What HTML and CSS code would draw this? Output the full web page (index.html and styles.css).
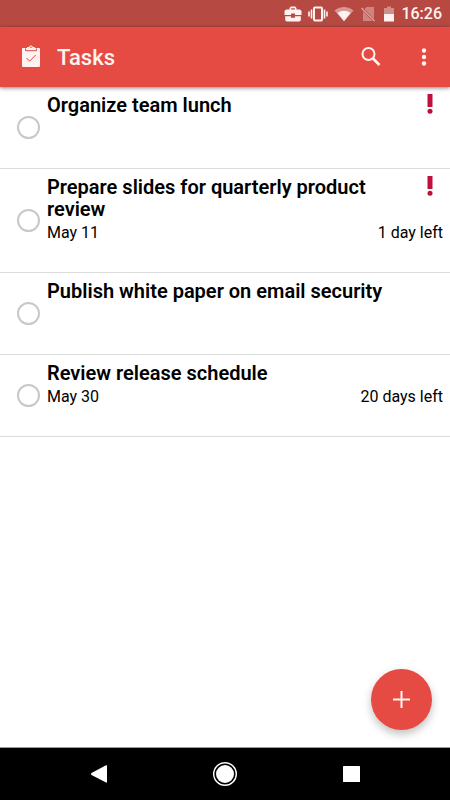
FILE: index.html
```html
<!DOCTYPE html>
<html lang="en">
<head>
<meta charset="utf-8">
<meta name="viewport" content="width=device-width, initial-scale=1">
<title>Tasks</title>
<link rel="stylesheet" href="styles.css">
</head>
<body>
<div class="status">
  <svg width="18" height="16" viewBox="0 0 18 16" fill="currentColor" aria-hidden="true"><path fill-rule="evenodd" d="M2 3.500h3.500V2l1.300-1.500h4.400L12.500 2v1.500H16l1.500 1.500v4h-6.500v-1.500H7V9H.5V5zM7.200 2.200v1.300h3.600V2.200zM1.200 10.200H7v1.500h4v-1.500h5.800v4l-1.300 1.300h-13l-1.300-1.300z"/></svg>
  <svg width="20" height="16" viewBox="0 0 20 16" aria-hidden="true"><rect x="6" y="1.500" width="8" height="13" rx="1" fill="none" stroke="currentColor" stroke-width="2"/><path d="M3.500 3.500v9M16.500 3.500v9M1 5.500v5M19 5.500v5" stroke="currentColor" stroke-width="1.600"/></svg>
  <svg width="20" height="16" viewBox="0 0 20 16" fill="currentColor" aria-hidden="true"><path opacity=".45" d="M.5 4.500C6-.3 14-.3 19.500 4.500L10 15.500z"/><path d="M3.500 7C7.500 4.100 12.500 4.100 16.500 7L10 15z"/></svg>
  <svg width="16" height="16" viewBox="0 0 16 16" aria-hidden="true"><path opacity=".35" fill="currentColor" d="M6.500 1H14v12L4.500 3zM3 5.200 12.500 15H3z"/><path d="M1.500 2 14.500 15" stroke="currentColor" stroke-opacity=".55" stroke-width="1.300"/></svg>
  <svg class="battery" width="10" height="16" viewBox="0 0 10 16" fill="currentColor" aria-hidden="true"><path opacity=".4" d="M3 .5h4V2h3v6H0V2h3z"/><path d="M0 8h10v7.500H0z"/></svg>
  <time>16:26</time>
</div>
<header class="bar">
  <svg width="20" height="24" viewBox="0 0 20 24" aria-hidden="true"><path fill="currentColor" d="M2 3h4.200V2h2C8.500 0 11.500 0 11.800 2h2v1H18q1 0 1 1v17q0 1-1 1H2q-1 0-1-1V4q0-1 1-1z"/><path d="M4.500 3.500v2.200h11V3.500M5.500 13l3.200 3.200 6-6.200" fill="none" stroke="#e54b42" stroke-width="1"/><circle cx="10" cy="2.200" r=".8" fill="#e54b42"/></svg>
  <h1>Tasks</h1>
  <button type="button" aria-label="Search"><svg width="22" height="22" viewBox="0 0 22 22" fill="none" stroke="currentColor" aria-hidden="true"><circle cx="8.500" cy="8" r="6" stroke-width="2"/><path d="m13 12.500 6.500 6.500" stroke-width="2.600"/></svg></button>
  <button type="button" aria-label="More options" class="more"><svg width="6" height="20" viewBox="0 0 6 20" fill="currentColor" aria-hidden="true"><circle cx="3" cy="3.500" r="2.200"/><circle cx="3" cy="10" r="2.200"/><circle cx="3" cy="16.500" r="2.200"/></svg></button>
</header>
<main>
  <ul class="tasks">
    <li>
      <input type="checkbox" id="t1">
      <div class="body">
        <div class="line"><label for="t1">Organize team lunch</label><svg class="priority" width="6" height="20" viewBox="0 0 6 20" role="img" aria-label="High priority"><path d="M.5 0h5v13h-5z"/><circle cx="3" cy="17.300" r="2.500"/></svg></div>
      </div>
    </li>
    <li>
      <input type="checkbox" id="t2">
      <div class="body">
        <div class="line"><label for="t2">Prepare slides for quarterly product review</label><svg class="priority" width="6" height="20" viewBox="0 0 6 20" role="img" aria-label="High priority"><path d="M.5 0h5v13h-5z"/><circle cx="3" cy="17.300" r="2.500"/></svg></div>
        <div class="due"><span>May 11</span><span>1 day left</span></div>
      </div>
    </li>
    <li>
      <input type="checkbox" id="t3">
      <div class="body">
        <div class="line"><label for="t3">Publish white paper on email security</label></div>
      </div>
    </li>
    <li>
      <input type="checkbox" id="t4">
      <div class="body">
        <div class="line"><label for="t4">Review release schedule</label></div>
        <div class="due"><span>May 30</span><span>20 days left</span></div>
      </div>
    </li>
  </ul>
</main>
<button type="button" class="add" aria-label="Add task"><svg width="17" height="17" viewBox="0 0 17 17" stroke="currentColor" stroke-width="2" aria-hidden="true"><path d="M8.500 0v17M0 8.500h17"/></svg></button>
<nav class="nav" aria-label="System">
  <button type="button" aria-label="Back"><svg width="26" height="26" viewBox="0 0 26 26" fill="currentColor" aria-hidden="true"><path d="M21 5v16q0 1-1 .5L5.500 14q-1.200-1 0-2L20 4.300q1-.3 1 .7z"/></svg></button>
  <button type="button" aria-label="Home"><svg width="26" height="26" viewBox="0 0 26 26" aria-hidden="true"><circle cx="13" cy="13" r="11.300" fill="none" stroke="currentColor" stroke-width="1.400"/><circle cx="13" cy="13" r="9" fill="currentColor"/></svg></button>
  <button type="button" aria-label="Recent apps"><svg width="26" height="26" viewBox="0 0 26 26" fill="currentColor" aria-hidden="true"><rect x="5" y="5" width="17" height="16" rx=".6"/></svg></button>
</nav>
</body>
</html>
```
FILE: styles.css
```css
* {
  box-sizing: border-box;
}

body {
  margin: 0;
  min-height: 100vh;
  display: flex;
  flex-direction: column;
  background: #fff;
  color: #000;
  font-family: Roboto, sans-serif;
}

button {
  display: flex;
  align-items: center;
  justify-content: center;
  padding: 0;
  border: 0;
  background: none;
  color: inherit;
}

svg {
  display: block;
  flex: none;
}

.status {
  display: flex;
  align-items: center;
  justify-content: flex-end;
  gap: 6px;
  height: 27px;
  padding-right: 8px;
  background: #b64a43;
  color: #fff3f1;
}

.status time {
  font-size: 16px;
  font-weight: 500;
  line-height: 20px;
}

.battery {
  margin: 0 1px 0 2px;
}

.bar {
  position: relative;
  display: flex;
  align-items: center;
  height: 60px;
  padding: 0 8px 0 21px;
  background: #e54b42;
  color: #fff3f1;
  box-shadow: 0 1px 4px rgba(0, 0, 0, 0.5);
}

.bar h1 {
  flex: 1;
  margin: 0 0 0 16px;
  padding-top: 2px;
  font-size: 22px;
  font-weight: 500;
  line-height: 28px;
}

.bar button {
  width: 48px;
  height: 48px;
  margin-right: 11px;
}

.bar .more {
  width: 36px;
  margin-right: 0;
}

main {
  flex: 1;
}

.tasks {
  margin: 0;
  padding: 0;
  list-style: none;
}

.tasks li {
  display: flex;
  align-items: center;
  min-height: 82px;
  padding: 0 7px 0 17px;
  border-bottom: 1px solid #dcdcdc;
}

.tasks input {
  appearance: none;
  flex: none;
  width: 23px;
  height: 23px;
  margin: 0 7px 0 0;
  border: 2px solid #c8c8c8;
  border-radius: 50%;
}

.tasks input:checked {
  background: #e54b42;
}

.body {
  flex: 1;
  align-self: stretch;
  padding: 7px 0 27px;
}

.line {
  display: flex;
  align-items: flex-start;
  justify-content: space-between;
  padding-right: 10px;
}

.line label {
  max-width: 340px;
  font-size: 20px;
  font-weight: 600;
  line-height: 22px;
}

.priority {
  fill: #c0103a;
}

.due {
  display: flex;
  justify-content: space-between;
  padding-top: 1px;
  font-size: 16px;
  line-height: 24px;
}

.add {
  position: fixed;
  right: 18px;
  bottom: 70px;
  width: 61px;
  height: 61px;
  border-radius: 50%;
  background: #e54b42;
  color: #fff3f1;
  box-shadow: 0 4px 9px rgba(0, 0, 0, 0.25);
}

.nav {
  display: flex;
  align-items: center;
  justify-content: space-between;
  height: 53px;
  padding: 0 86px;
  border-top: 1px solid #999;
  background: #000;
  color: #fff;
}
```
